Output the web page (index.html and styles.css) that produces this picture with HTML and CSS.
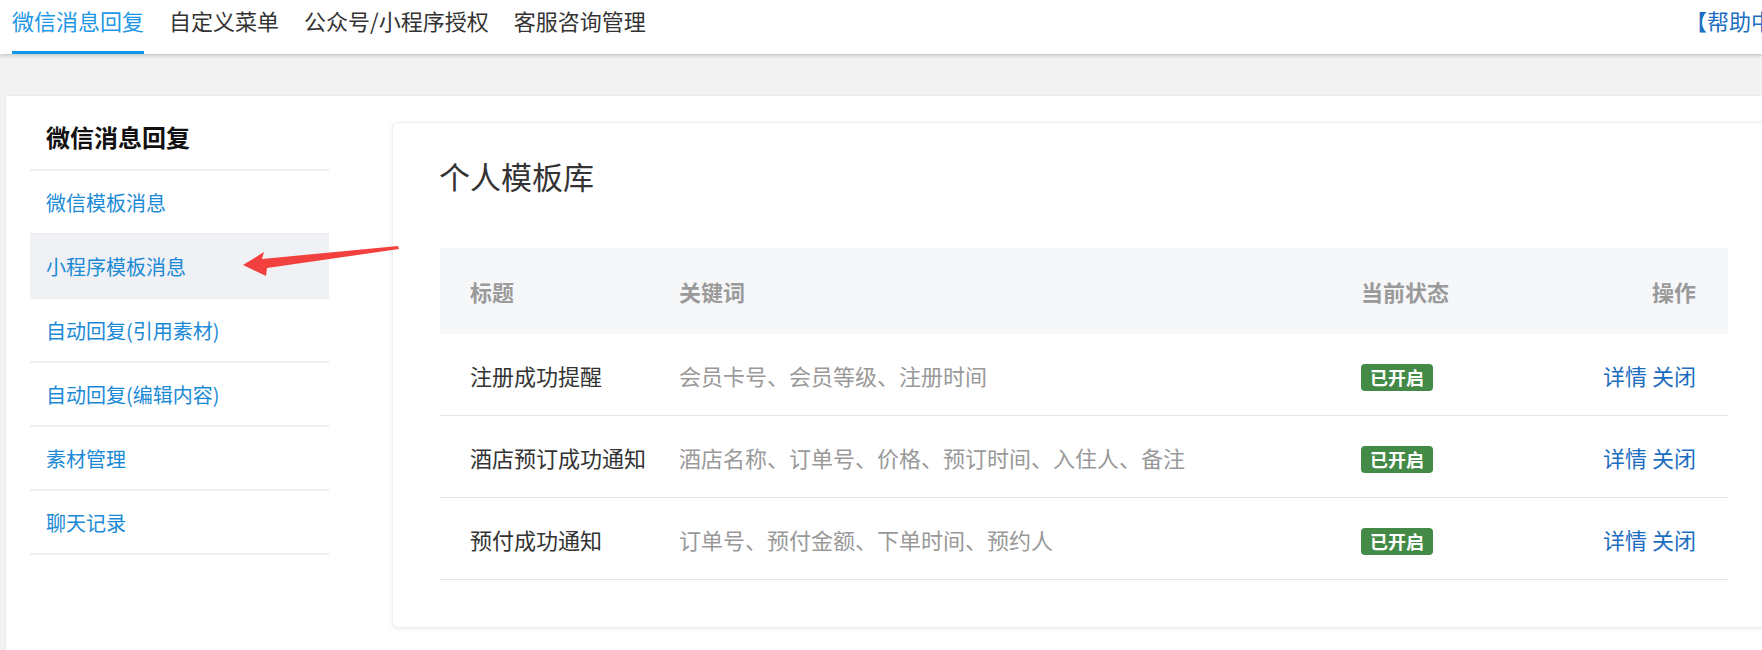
FILE: index.html
```html
<!DOCTYPE html>
<html lang="zh-CN">
<head>
<meta charset="utf-8">
<title>微信消息回复</title>
<link rel="stylesheet" href="styles.css">
</head>
<body>
<header class="topnav">
  <nav class="tabs">
    <a class="tab active">微信消息回复</a>
    <a class="tab">自定义菜单</a>
    <a class="tab">公众号/小程序授权</a>
    <a class="tab">客服咨询管理</a>
  </nav>
  <a class="help">【帮助中心】</a>
</header>

<main class="card">
  <aside class="sidebar">
    <div class="side-title">微信消息回复</div>
    <a class="side-item">微信模板消息</a>
    <a class="side-item active">小程序模板消息</a>
    <a class="side-item">自动回复(引用素材)</a>
    <a class="side-item">自动回复(编辑内容)</a>
    <a class="side-item">素材管理</a>
    <a class="side-item">聊天记录</a>
  </aside>

  <section class="panel">
    <h2 class="panel-title">个人模板库</h2>
    <div class="table">
      <div class="row head">
        <div class="c-title">标题</div>
        <div class="c-kw">关键词</div>
        <div class="c-state">当前状态</div>
        <div class="c-op">操作</div>
      </div>
      <div class="row">
        <div class="c-title">注册成功提醒</div>
        <div class="c-kw">会员卡号、会员等级、注册时间</div>
        <div class="c-state"><span class="badge">已开启</span></div>
        <div class="c-op"><a class="link">详情</a> <a class="link">关闭</a></div>
      </div>
      <div class="row">
        <div class="c-title">酒店预订成功通知</div>
        <div class="c-kw">酒店名称、订单号、价格、预订时间、入住人、备注</div>
        <div class="c-state"><span class="badge">已开启</span></div>
        <div class="c-op"><a class="link">详情</a> <a class="link">关闭</a></div>
      </div>
      <div class="row">
        <div class="c-title">预付成功通知</div>
        <div class="c-kw">订单号、预付金额、下单时间、预约人</div>
        <div class="c-state"><span class="badge">已开启</span></div>
        <div class="c-op"><a class="link">详情</a> <a class="link">关闭</a></div>
      </div>
    </div>
  </section>
</main>

<svg class="arrow" width="1762" height="650" viewBox="0 0 1762 650" aria-hidden="true">
  <polygon points="243,265 264,252 262,259 398,246 399,249 267,268 266,276" fill="#f2403e"/>
</svg>
</body>
</html>
```

FILE: styles.css
```css
* { box-sizing: border-box; }

html, body {
  margin: 0;
  padding: 0;
}

body {
  width: 1762px;
  height: 650px;
  overflow: hidden;
  background: #f2f2f2;
  font-family: "Noto Sans CJK SC", "Noto Sans", "Liberation Sans", sans-serif;
  position: relative;
}

a { text-decoration: none; cursor: pointer; }

.topnav {
  height: 54px;
  background: #fff;
  display: flex;
  box-shadow: 0 2px 3px rgba(0, 0, 0, 0.16);
  position: relative;
  z-index: 2;
}

.tabs {
  display: flex;
  gap: 25px;
  padding-left: 12px;
  flex: 1;
}

.tab {
  font-size: 22px;
  line-height: 40px;
  height: 54px;
  color: #333;
  border-bottom: 3px solid transparent;
  white-space: nowrap;
}

.tab.active {
  color: #1f97e6;
  border-bottom-color: #0e9ae6;
}

.help {
  width: 77px;
  overflow: hidden;
  white-space: nowrap;
  font-size: 22px;
  line-height: 40px;
  color: #1b6fc2;
}

.card {
  margin: 41px 0 0 5px;
  height: 560px;
  background: #fff;
  border-left: 1px solid #e8e8e8;
  border-top: 1px solid #ececec;
  display: flex;
  align-items: flex-start;
  padding-left: 24px;
  overflow: hidden;
}

.sidebar {
  width: 299px;
  flex: 0 0 299px;
  display: flex;
  flex-direction: column;
}

.side-title {
  height: 75px;
  padding: 24px 0 0 16px;
  font-size: 24px;
  line-height: 34px;
  font-weight: bold;
  color: #111;
  border-bottom: 2px solid #efefef;
}

.side-item {
  height: 64px;
  padding-left: 16px;
  display: flex;
  align-items: center;
  font-size: 20px;
  color: #1a8ad6;
  border-bottom: 2px solid #efefef;
}

.side-item.active {
  background: #f0f1f5;
}

.panel {
  flex: 0 0 1400px;
  margin: 26px 0 0 63px;
  height: 506px;
  background: #fff;
  border: 1px solid #eeeeee;
  border-radius: 6px;
  box-shadow: 0 1px 4px rgba(0, 0, 0, 0.08);
  padding: 0 47px;
}

.panel-title {
  margin: 33px 0 52px -1px;
  font-size: 31px;
  line-height: 40px;
  font-weight: normal;
  color: #333;
}

.table {
  width: 1288px;
}

.row {
  display: grid;
  grid-template-columns: 209px 682px 1fr auto;
  align-items: center;
  padding: 0 32px 0 30px;
  height: 82px;
  border-bottom: 1px solid #e6e6e6;
  font-size: 22px;
  color: #333;
}

.row.head {
  height: 86px;
  background: #f6f7f9;
  border-bottom: none;
  color: #9a9a9a;
  font-weight: bold;
}

.c-kw { color: #999; }
.row.head .c-kw { color: #9a9a9a; }

.c-op { text-align: right; }

.badge {
  display: inline-block;
  height: 27px;
  line-height: 27px;
  padding: 0 9px;
  background: #438a47;
  color: #fff;
  font-size: 18px;
  font-weight: bold;
  border-radius: 4px;
  vertical-align: middle;
}

.link {
  color: #1b6dc0;
}

.arrow {
  position: absolute;
  left: 0;
  top: 0;
  pointer-events: none;
  z-index: 5;
}
```
